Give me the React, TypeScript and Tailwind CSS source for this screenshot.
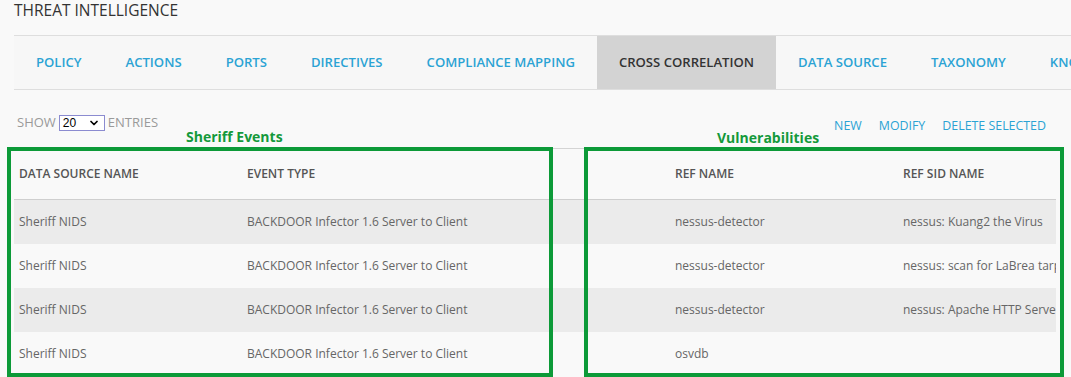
import { ChevronDown } from 'lucide-react';

const tabs = [
  'POLICY',
  'ACTIONS',
  'PORTS',
  'DIRECTIVES',
  'COMPLIANCE MAPPING',
  'CROSS CORRELATION',
  'DATA SOURCE',
  'TAXONOMY',
  'KNOWLEDGE DB',
];

const rows = [
  { source: 'Sheriff NIDS', event: 'BACKDOOR Infector 1.6 Server to Client', ref: 'nessus-detector', sid: 'nessus: Kuang2 the Virus' },
  { source: 'Sheriff NIDS', event: 'BACKDOOR Infector 1.6 Server to Client', ref: 'nessus-detector', sid: 'nessus: scan for LaBrea tarpitted hosts' },
  { source: 'Sheriff NIDS', event: 'BACKDOOR Infector 1.6 Server to Client', ref: 'nessus-detector', sid: 'nessus: Apache HTTP Server Version' },
  { source: 'Sheriff NIDS', event: 'BACKDOOR Infector 1.6 Server to Client', ref: 'osvdb', sid: '' },
];

const cols = 'grid grid-cols-[228px_228px_200px_228px_1fr]';

export default function App() {
  return (
    <div className="relative w-[1071px] h-[377px] overflow-hidden bg-[#f9f9f9] font-['Open_Sans',sans-serif]">
      {/* Title */}
      <h1 className="h-[35px] pl-[14px] text-[15.5px] leading-[21px] font-medium text-[#333]">
        THREAT INTELLIGENCE
      </h1>

      {/* Tabs */}
      <nav className="ml-[14px] flex h-[55px] overflow-hidden border-y border-[#dedede] bg-[#f7f7f7]">
        {tabs.map((tab) => {
          const active = tab === 'CROSS CORRELATION';
          return (
            <div
              key={tab}
              className={`flex shrink-0 items-center whitespace-nowrap px-[22px] text-[13.1px] font-semibold ${
                active ? 'bg-[#d3d3d3] text-[#333]' : 'text-[#2ba3d4]'
              }`}
            >
              {tab}
            </div>
          );
        })}
      </nav>

      {/* Toolbar */}
      <div className="ml-[14px] mr-[15px] flex h-[58px] justify-between">
        <div className="box-content flex h-[16px] items-center gap-[3px] pl-[3px] pt-[25px] text-[13px] text-[#9a9a9a]">
          <span>SHOW</span>
          <div className="flex h-[16px] w-[46px] items-center justify-between border border-[#8b8bd0] bg-white pl-[3px] pr-[4px] font-['Liberation_Sans',sans-serif] text-[12px] text-black">
            <span>20</span>
            <ChevronDown size={12} strokeWidth={3.5} />
          </div>
          <span>ENTRIES</span>
        </div>
        <div className="flex gap-[17px] pr-[10px] pt-[28px] text-[12.4px] leading-[16px] text-[#2ba3d4]">
          <span>NEW</span>
          <span>MODIFY</span>
          <span>DELETE SELECTED</span>
        </div>
      </div>

      {/* Table */}
      <div className="ml-[14px] mr-[15px] border-t border-[#d4d4d4]">
        <div className={`${cols} h-[51px] items-center border-b border-[#cfcfcf] text-[12px] font-semibold text-[#555]`}>
          <div className="pl-[5px]">DATA SOURCE NAME</div>
          <div className="pl-[5px]">EVENT TYPE</div>
          <div />
          <div className="pl-[5px]">REF NAME</div>
          <div className="pl-[5px]">REF SID NAME</div>
        </div>
        {rows.map((r, i) => (
          <div
            key={i}
            className={`${cols} h-[44px] items-center text-[12px] text-[#666] ${i % 2 === 0 ? 'bg-[#ebebeb]' : ''}`}
          >
            <div className="pl-[5px]">{r.source}</div>
            <div className="whitespace-nowrap pl-[5px]">{r.event}</div>
            <div />
            <div className="pl-[5px]">{r.ref}</div>
            <div className="overflow-hidden whitespace-nowrap pl-[5px]">{r.sid}</div>
          </div>
        ))}
      </div>

      {/* Annotations */}
      <div className="absolute left-[186px] top-[127px] text-[14px] font-bold leading-[20px] text-[#14993b]">
        Sheriff Events
      </div>
      <div className="absolute left-[717px] top-[128px] text-[14px] font-bold leading-[20px] text-[#14993b]">
        Vulnerabilities
      </div>
      <div className="absolute left-[7px] top-[147px] h-[230px] w-[546px] border-4 border-[#0c9a38]" />
      <div className="absolute left-[584px] top-[147px] h-[230px] w-[480px] border-4 border-[#0c9a38]" />
    </div>
  );
}
